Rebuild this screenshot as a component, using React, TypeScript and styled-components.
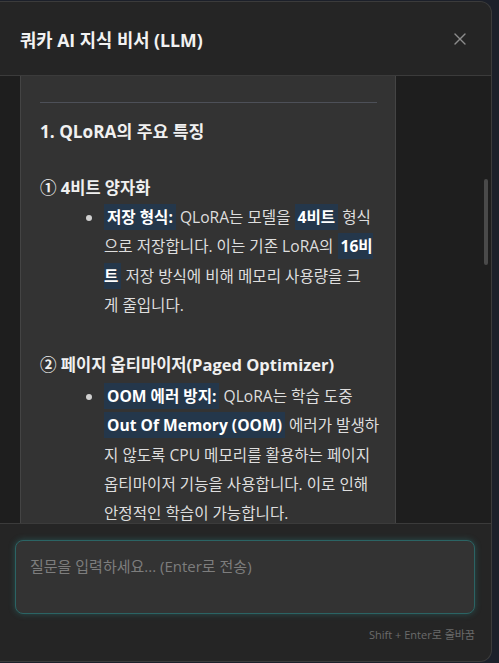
import React from 'react';
import styled, { createGlobalStyle } from 'styled-components';
import { X } from 'lucide-react';

const GlobalStyle = createGlobalStyle`
    html, body {
        margin: 0;
        padding: 0;
        background: #1c202a;
        font-family: 'Open Sans', 'Noto Sans CJK KR', sans-serif;
    }
    * {
        box-sizing: border-box;
    }
`;

const Page = styled.div`
    width: 499px;
    height: 663px;
    padding-top: 1px;
    overflow: hidden;
`;

const Modal = styled.div`
    width: 492px;
    height: 661px;
    display: flex;
    flex-direction: column;
    background: #252525;
    border: 1px solid #3b3b3b;
    border-left: none;
    border-radius: 0 12px 12px 0;
    overflow: hidden;
`;

const Header = styled.div`
    height: 74px;
    flex-shrink: 0;
    display: flex;
    align-items: center;
    justify-content: space-between;
    padding: 0 21px 0 20px;
    border-bottom: 1px solid #3b3b3b;
`;

const Title = styled.h2`
    margin: 0;
    font-size: 17.7px;
    font-weight: 700;
    color: #f2f2f2;
`;

const CloseButton = styled.button`
    display: flex;
    padding: 0;
    border: none;
    background: none;
    color: #8c8c8c;
    cursor: pointer;
`;

const Messages = styled.div`
    position: relative;
    flex: 1;
    display: flex;
    padding: 0 95px 0 20px;
    background: #1e1e1e;
    overflow: hidden;
`;

const Bubble = styled.div`
    flex: 1;
    min-width: 0;
    padding: 26px 18px 0 19px;
    background: #333333;
    border-left: 1px solid #444444;
    border-right: 1px solid #444444;
    color: #dedede;
    font-size: 15.6px;
`;

const Divider = styled.hr`
    margin: 0;
    border: none;
    border-top: 1px solid #4d5058;
`;

const SectionTitle = styled.h3`
    margin: 17px 0 0;
    font-size: 17.2px;
    line-height: 24px;
    font-weight: 700;
    color: #f0f0f0;
`;

const SubTitle = styled.h4<{ $gap: number }>`
    margin: ${p => p.$gap}px 0 0;
    font-size: 16.5px;
    line-height: 24px;
    font-weight: 700;
    color: #f0f0f0;
`;

const List = styled.ul<{ $gap: number }>`
    margin: ${p => p.$gap}px 0 0;
    padding-left: 64px;
`;

const Item = styled.li`
    line-height: 29.3px;
    white-space: nowrap;
    &::marker {
        color: #d0d0d0;
    }
`;

const Mark = styled.strong`
    padding: 2px 3px;
    background: #24374b;
    color: #ffffff;
    font-weight: 700;
`;

const ScrollThumb = styled.div`
    position: absolute;
    right: 3px;
    top: 103px;
    width: 4px;
    height: 86px;
    border-radius: 2px;
    background: #4a4a4a;
`;

const Footer = styled.div`
    flex-shrink: 0;
    display: flex;
    flex-direction: column;
    gap: 12px;
    padding: 16px 16px 19px 15px;
    border-top: 1px solid #3b3b3b;
`;

const Input = styled.textarea`
    width: 460px;
    height: 74px;
    padding: 14px 14px;
    resize: none;
    background: #333333;
    border: 1px solid #2b6464;
    border-radius: 8px;
    box-shadow: 0 0 6px rgba(50, 160, 160, 0.35);
    color: #e0e0e0;
    font-family: inherit;
    font-size: 15px;
    outline: none;
    &::placeholder {
        color: #7d7d7d;
    }
`;

const Hint = styled.div`
    align-self: flex-end;
    font-size: 11px;
    color: #6b6b6b;
`;

const App = () => {
    return (
        <Page>
            <GlobalStyle />
            <Modal>
                <Header>
                    <Title>쿼카 AI 지식 비서 (LLM)</Title>
                    <CloseButton aria-label="닫기">
                        <X size={20} strokeWidth={1.6} />
                    </CloseButton>
                </Header>
                <Messages>
                    <Bubble>
                        <Divider />
                        <SectionTitle>1. QLoRA의 주요 특징</SectionTitle>
                        <SubTitle $gap={32}>① 4비트 양자화</SubTitle>
                        <List $gap={3}>
                            <Item>
                                <Mark>저장 형식:</Mark> QLoRA는 모델을 <Mark>4비트</Mark> 형식
                                <br />
                                으로 저장합니다. 이는 기존 LoRA의 <Mark>16비<br />트</Mark> 저장 방식에 비해 메모리 사용량을 크
                                <br />게 줄입니다.
                            </Item>
                        </List>
                        <SubTitle $gap={33}>② 페이지 옵티마이저(Paged Optimizer)</SubTitle>
                        <List $gap={5}>
                            <Item>
                                <Mark>OOM 에러 방지:</Mark> QLoRA는 학습 도중
                                <br />
                                <Mark>Out Of Memory (OOM)</Mark> 에러가 발생하
                                <br />
                                지 않도록 CPU 메모리를 활용하는 페이지
                                <br />
                                옵티마이저 기능을 사용합니다. 이로 인해
                                <br />
                                안정적인 학습이 가능합니다.
                            </Item>
                        </List>
                    </Bubble>
                    <ScrollThumb />
                </Messages>
                <Footer>
                    <Input placeholder="질문을 입력하세요... (Enter로 전송)" />
                    <Hint>Shift + Enter로 줄바꿈</Hint>
                </Footer>
            </Modal>
        </Page>
    );
};

export default App;
